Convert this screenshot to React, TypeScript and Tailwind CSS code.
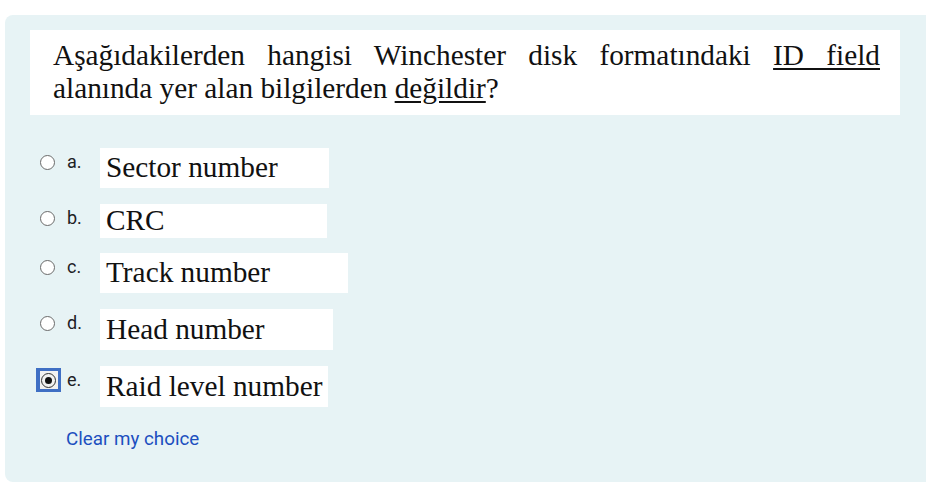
import { FC } from "react";

interface Choice {
  key: string;
  text: string;
  boxW: string;
  boxH: string;
  mt: string;
  checked?: boolean;
}

const choices: Choice[] = [
  { key: "a.", text: "Sector number", boxW: "w-[229px]", boxH: "h-[40px]", mt: "mt-0" },
  { key: "b.", text: "CRC", boxW: "w-[227px]", boxH: "h-[34px]", mt: "mt-[16px]" },
  { key: "c.", text: "Track number", boxW: "w-[248px]", boxH: "h-[40px]", mt: "mt-[15px]" },
  { key: "d.", text: "Head number", boxW: "w-[233px]", boxH: "h-[41px]", mt: "mt-[16px]" },
  { key: "e.", text: "Raid level number", boxW: "w-[228px]", boxH: "h-[41px]", mt: "mt-[16px]", checked: true },
];

const Radio: FC<{ checked?: boolean }> = ({ checked }) => {
  if (checked) {
    return (
      <div className="flex h-[24px] w-[25px] items-center justify-center bg-[#3f6fc4]">
        <div className="flex h-[18px] w-[18px] items-center justify-center bg-[#f1f1f1]">
          <div className="flex h-[15px] w-[15px] items-center justify-center rounded-full border-[1.5px] border-[#333]">
            <div className="h-[7px] w-[7px] rounded-full bg-[#111]" />
          </div>
        </div>
      </div>
    );
  }
  return (
    <div className="flex h-[24px] w-[25px] items-center justify-center pr-[2px]">
      <div className="h-[15px] w-[15px] rounded-full border-[1.5px] border-[#6a6a6a] bg-white" />
    </div>
  );
};

const App: FC = () => {
  return (
    <div className="h-[484px] w-[926px] overflow-hidden bg-white pl-[5px] pt-[15px]">
      <div className="h-[467px] w-[940px] rounded-lg bg-[#e7f3f5] pt-[15px]">
        <div
          className="ml-[25px] h-[85px] w-[870px] bg-white pl-[23px] pr-[20px] pt-[9px] text-justify text-[29.3px] leading-[33px] text-[#111]"
          style={{ fontFamily: '"Liberation Serif", "Times New Roman", serif' }}
        >
          Aşağıdakilerden hangisi Winchester disk formatındaki{" "}
          <span className="underline underline-offset-[3px]">ID field</span> alanında yer alan bilgilerden{" "}
          <span className="underline underline-offset-[3px]">değildir</span>?
        </div>

        <div className="mt-[33px] pl-[31px]">
          {choices.map((c) => (
            <div key={c.key} className={`flex items-start ${c.mt}`}>
              <div className="mt-[2px]">
                <Radio checked={c.checked} />
              </div>
              <div
                className="ml-[6px] mt-[2px] h-[24px] w-[33px] text-[18px] leading-[24px] text-[#1d2125]"
                style={{ fontFamily: "Roboto, sans-serif" }}
              >
                {c.key}
              </div>
              <div
                className={`flex items-center bg-white pl-[6px] text-[29.3px] text-[#111] ${c.boxW} ${c.boxH}`}
                style={{ fontFamily: '"Liberation Serif", "Times New Roman", serif' }}
              >
                {c.text}
              </div>
            </div>
          ))}
          <div
            className="ml-[30px] mt-[20px] text-[18.8px] leading-[24px] text-[#1c4fbf]"
            style={{ fontFamily: "Roboto, sans-serif" }}
          >
            Clear my choice
          </div>
        </div>
      </div>
    </div>
  );
};

export default App;
